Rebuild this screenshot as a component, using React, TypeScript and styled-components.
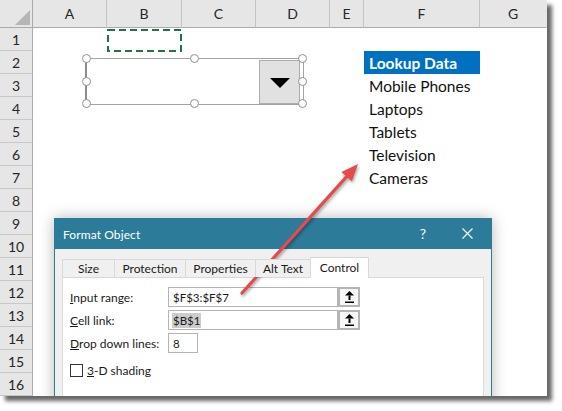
import React from "react";
import styled, { createGlobalStyle, css } from "styled-components";

const GlobalStyle = createGlobalStyle`
  *, *::before, *::after { box-sizing: border-box; }
  html, body { margin: 0; padding: 0; background: #ffffff; }
  body { font-family: "Lato", "Liberation Sans", sans-serif; }
`;

const Stage = styled.div`
  width: 562px;
  height: 411px;
  background: #ffffff;
`;

const Window = styled.div`
  position: relative;
  width: 547px;
  height: 396px;
  overflow: hidden;
  background: #ffffff;
  box-shadow: 5px 5px 4px rgba(0, 0, 0, 0.6);
`;

const Sheet = styled.div`
  display: grid;
  grid-template-columns: 33px 74px 75px 74px 74px 34px 116px 67px;
  grid-template-rows: 28px repeat(16, 23px);
`;

const Corner = styled.div`
  background: #e6e6e6;
  border-right: 1px solid #ababab;
  border-bottom: 1px solid #ababab;
  display: flex;
  align-items: flex-end;
  justify-content: flex-end;
  padding: 0 2px 2px 0;
`;

const ColHeader = styled.div<{ $last?: boolean }>`
  background: #e6e6e6;
  border-bottom: 1px solid #ababab;
  border-right: 1px solid ${(p) => (p.$last ? "#e6e6e6" : "#c3c3c3")};
  display: flex;
  align-items: center;
  justify-content: center;
  font-size: 14px;
  color: #262626;
`;

const RowHeader = styled.div`
  background: #e6e6e6;
  border-right: 1px solid #ababab;
  border-bottom: 1px solid #c8c8c8;
  display: flex;
  align-items: center;
  justify-content: center;
  font-size: 14px;
  color: #262626;
`;

const Cell = styled.div<{ $highlight?: boolean }>`
  display: flex;
  align-items: center;
  padding-left: 5px;
  white-space: nowrap;
  font-size: 15.5px;
  color: #111111;
  ${(p) =>
    p.$highlight &&
    css`
      background: #0070c0;
      color: #ffffff;
      font-weight: 700;
    `}
`;

const Marquee = styled.svg`
  position: absolute;
  left: 107px;
  top: 29px;
`;

const ComboFrame = styled.div`
  position: absolute;
  left: 85px;
  top: 58px;
  width: 219px;
  height: 47px;
  border: 1px solid #a3a3a3;
  border-left: 2px solid #8c8c8c;
  background: #ffffff;
  display: flex;
  justify-content: flex-end;
  padding: 1px 3px 0 0;
`;

const DropButton = styled.div`
  width: 41px;
  background: #e1e1e1;
  border: 1px solid #adadad;
  display: flex;
  align-items: center;
  justify-content: center;
`;

const DropTriangle = styled.span`
  width: 0;
  height: 0;
  border-left: 10.5px solid transparent;
  border-right: 10.5px solid transparent;
  border-top: 10px solid #000000;
  margin-top: 2px;
`;

const Handle = styled.span<{ $x: string; $y: string }>`
  position: absolute;
  left: ${(p) => p.$x};
  top: ${(p) => p.$y};
  width: 9px;
  height: 9px;
  margin: -5px 0 0 -5px;
  border-radius: 50%;
  background: #ffffff;
  border: 1.5px solid #8f8f8f;
`;

const Dialog = styled.div`
  position: absolute;
  left: 54px;
  top: 218px;
  width: 438px;
  height: 230px;
  background: #f0f0f0;
  border-left: 1px solid #2c7b99;
  border-right: 1px solid #2c7b99;
  box-shadow: 0 0 14px rgba(0, 0, 0, 0.28);
  display: flex;
  flex-direction: column;
`;

const TitleBar = styled.div`
  height: 31px;
  flex: none;
  background: #2c7b99;
  display: flex;
  align-items: center;
  padding-left: 8px;
  color: #ffffff;
`;

const Title = styled.span`
  flex: 1;
  font-size: 12px;
  letter-spacing: 0.1px;
  padding-top: 1px;
`;

const CaptionButton = styled.span`
  width: 44px;
  height: 31px;
  display: flex;
  align-items: center;
  justify-content: center;
  font-size: 14px;
  color: #ffffff;
`;

const CaptionButtons = styled.div`
  display: flex;
  padding-right: 2px;
`;

const DialogBody = styled.div`
  padding: 8px 7px 0 7px;
  flex: 1;
  display: flex;
  flex-direction: column;
`;

const TabStrip = styled.div`
  display: flex;
  align-items: flex-end;
  height: 21px;
  margin-bottom: -1px;
  position: relative;
  z-index: 1;
`;

const Tab = styled.div<{ $w: number; $active?: boolean }>`
  width: ${(p) => p.$w}px;
  height: 18px;
  margin-bottom: 1px;
  border-top: 1px solid #d9d9d9;
  border-left: 1px solid #d9d9d9;
  background: #f0f0f0;
  display: flex;
  align-items: center;
  justify-content: center;
  font-size: 12px;
  color: #1a1a1a;
  ${(p) =>
    p.$active &&
    css`
      height: 21px;
      margin-bottom: 0;
      background: #ffffff;
      border-right: 1px solid #d9d9d9;
      padding-bottom: 1px;
    `}
`;

const Panel = styled.div`
  flex: 1;
  background: #ffffff;
  border: 1px solid #d9d9d9;
  padding: 9px 7px;
`;

const Form = styled.div`
  display: grid;
  grid-template-columns: 98px 1fr;
  grid-auto-rows: 20px;
  row-gap: 3px;
  align-items: center;
  font-size: 12px;
  color: #1a1a1a;
`;

const Label = styled.span`
  white-space: nowrap;
`;

const FieldGroup = styled.div`
  display: flex;
  height: 20px;
`;

const TextBox = styled.div<{ $w: number }>`
  width: ${(p) => p.$w}px;
  height: 20px;
  border: 1px solid #b4b4b4;
  background: #ffffff;
  display: flex;
  align-items: center;
  padding-left: 4px;
  font-size: 11.5px;
  color: #1a1a1a;
`;

const Selected = styled.span`
  background: #cccccc;
  padding: 1px 1px;
  margin-left: -1px;
`;

const RefButton = styled.div`
  width: 22px;
  height: 20px;
  border: 2px solid #b4b4b4;
  background: #f7f7f7;
  display: flex;
  align-items: center;
  justify-content: center;
`;

const CheckRow = styled.label`
  grid-column: 1 / span 2;
  margin-top: 9px;
  display: flex;
  align-items: center;
  gap: 4px;
  height: 13px;
`;

const CheckBox = styled.span`
  width: 13px;
  height: 13px;
  border: 1px solid #333333;
  background: #ffffff;
`;

const Overlay = styled.svg`
  position: absolute;
  left: 0;
  top: 0;
  pointer-events: none;
  filter: drop-shadow(1px 2px 1.5px rgba(0, 0, 0, 0.35));
`;

const colLetters = ["A", "B", "C", "D", "E", "F", "G"];
const listData: Record<number, { text: string; head?: boolean }> = {
  2: { text: "Lookup Data", head: true },
  3: { text: "Mobile Phones" },
  4: { text: "Laptops" },
  5: { text: "Tablets" },
  6: { text: "Television" },
  7: { text: "Cameras" },
};

const tabs = [
  { label: "Size", w: 52 },
  { label: "Protection", w: 71 },
  { label: "Properties", w: 70 },
  { label: "Alt Text", w: 55 },
  { label: "Control", w: 59, active: true },
];

const RefIcon = () => (
  <svg width="9" height="12" viewBox="0 0 9 12">
    <polygon points="4.5,0 0,4.5 9,4.5" fill="#000" />
    <rect x="3.5" y="4.5" width="2" height="4.5" fill="#000" />
    <rect x="0" y="10.5" width="9" height="1.5" fill="#000" />
  </svg>
);

const handles: [string, string][] = [
  ["0%", "0%"],
  ["50%", "0%"],
  ["100%", "0%"],
  ["0%", "50%"],
  ["100%", "50%"],
  ["0%", "100%"],
  ["50%", "100%"],
  ["100%", "100%"],
];

// arrow geometry
const tail = { x: 242, y: 293 };
const tip = { x: 358, y: 164 };
const dx = tip.x - tail.x;
const dy = tip.y - tail.y;
const len = Math.sqrt(dx * dx + dy * dy);
const ux = dx / len;
const uy = dy / len;
const nx = -uy;
const ny = ux;
const headLen = 17;
const headHalf = 7;
const bx = tip.x - headLen * ux;
const by = tip.y - headLen * uy;
const headPts = `${tip.x},${tip.y} ${bx + headHalf * nx},${by + headHalf * ny} ${bx - headHalf * nx},${by - headHalf * ny}`;

export default function App() {
  const rows = Array.from({ length: 16 }, (_, i) => i + 1);
  return (
    <Stage>
      <GlobalStyle />
      <Window>
        <Sheet>
          <Corner>
            <svg width="15" height="15" viewBox="0 0 15 15">
              <polygon points="15,0 15,15 0,15" fill="#b6b6b6" />
            </svg>
          </Corner>
          {colLetters.map((c, i) => (
            <ColHeader key={c} $last={i === colLetters.length - 1}>
              {c}
            </ColHeader>
          ))}
          {rows.map((r) => (
            <React.Fragment key={r}>
              <RowHeader>{r}</RowHeader>
              {colLetters.map((c) => {
                const d = c === "F" ? listData[r] : undefined;
                return (
                  <Cell key={c} $highlight={!!d?.head}>
                    {d?.text}
                  </Cell>
                );
              })}
            </React.Fragment>
          ))}
        </Sheet>

        <Marquee width="75" height="23" viewBox="0 0 75 23">
          <rect
            x="1"
            y="1"
            width="73"
            height="21"
            fill="none"
            stroke="#217346"
            strokeWidth="2"
            strokeDasharray="7 4"
          />
        </Marquee>

        <ComboFrame>
          <DropButton>
            <DropTriangle />
          </DropButton>
          {handles.map(([x, y]) => (
            <Handle key={x + y} $x={x} $y={y} />
          ))}
        </ComboFrame>

        <Dialog>
          <TitleBar>
            <Title>Format Object</Title>
            <CaptionButtons>
              <CaptionButton>?</CaptionButton>
              <CaptionButton>
                <svg width="11" height="11" viewBox="0 0 11 11">
                  <path d="M0.5 0.5 L10.5 10.5 M10.5 0.5 L0.5 10.5" stroke="#fff" strokeWidth="1.1" />
                </svg>
              </CaptionButton>
            </CaptionButtons>
          </TitleBar>
          <DialogBody>
            <TabStrip>
              {tabs.map((t) => (
                <Tab key={t.label} $w={t.w} $active={t.active}>
                  {t.label}
                </Tab>
              ))}
            </TabStrip>
            <Panel>
              <Form>
                <Label>
                  <u>I</u>nput range:
                </Label>
                <FieldGroup>
                  <TextBox $w={170}>$F$3:$F$7</TextBox>
                  <RefButton>
                    <RefIcon />
                  </RefButton>
                </FieldGroup>
                <Label>
                  <u>C</u>ell link:
                </Label>
                <FieldGroup>
                  <TextBox $w={170}>
                    <Selected>$B$1</Selected>
                  </TextBox>
                  <RefButton>
                    <RefIcon />
                  </RefButton>
                </FieldGroup>
                <Label>
                  <u>D</u>rop down lines:
                </Label>
                <FieldGroup>
                  <TextBox $w={30}>8</TextBox>
                </FieldGroup>
                <CheckRow>
                  <CheckBox />
                  <span>
                    <u>3</u>-D shading
                  </span>
                </CheckRow>
              </Form>
            </Panel>
          </DialogBody>
        </Dialog>

        <Overlay width="547" height="396" viewBox="0 0 547 396">
          <line
            x1={tail.x}
            y1={tail.y}
            x2={bx + ux * 2}
            y2={by + uy * 2}
            stroke="#e8494b"
            strokeWidth="3.2"
            strokeLinecap="round"
          />
          <polygon points={headPts} fill="#e8494b" />
        </Overlay>
      </Window>
    </Stage>
  );
}
